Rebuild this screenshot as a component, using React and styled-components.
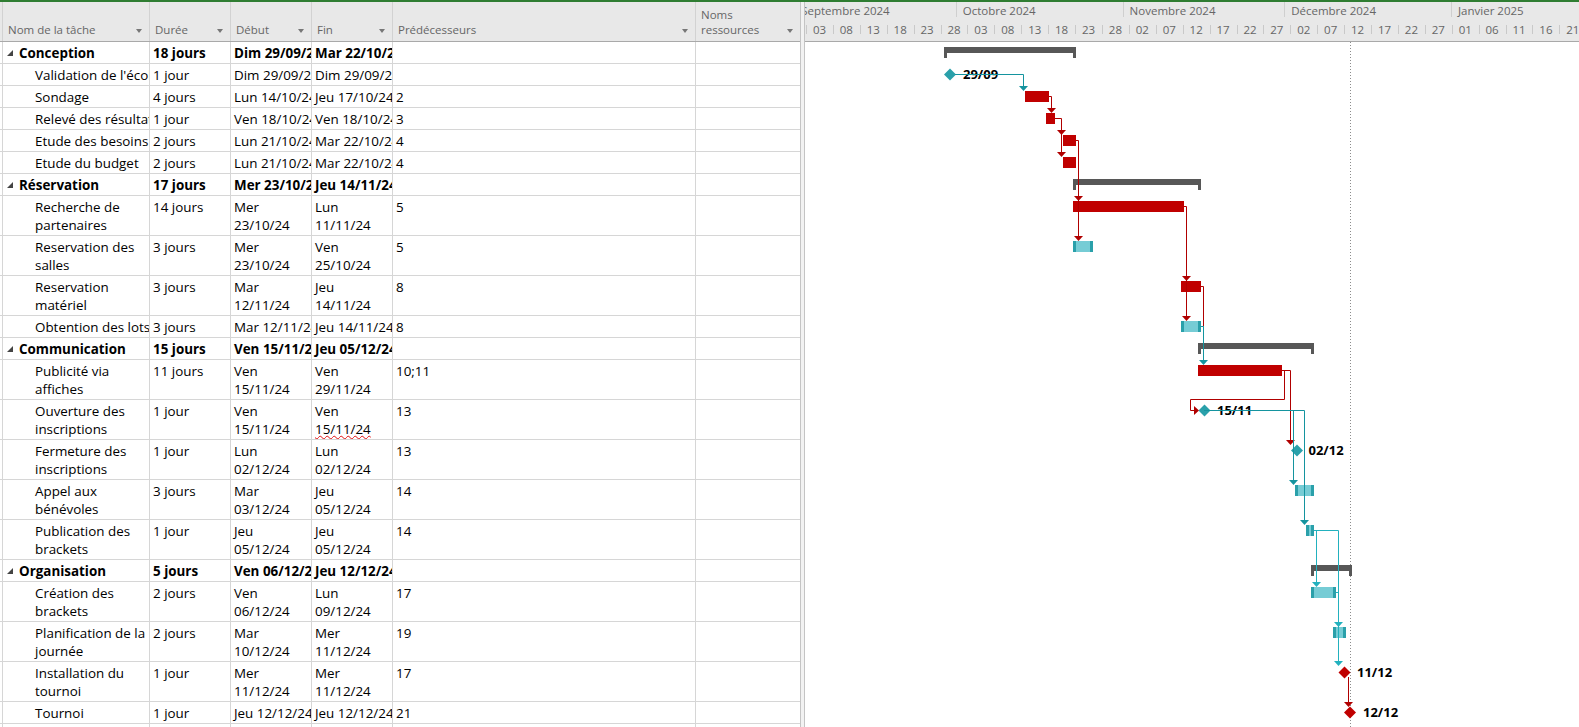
import React from "react";
import styled, { createGlobalStyle } from "styled-components";

const FONT = `"Open Sans", "Noto Sans", sans-serif`;
const DAY = 5.384;

const GlobalStyle = createGlobalStyle`
  html, body { margin: 0; padding: 0; background: #fff; }
  body { font-family: ${FONT}; color: #000; }
`;

const columns = [
  { key: "name", label: "Nom de la tâche", width: 147 },
  { key: "dur", label: "Durée", width: 81 },
  { key: "start", label: "Début", width: 81 },
  { key: "end", label: "Fin", width: 81 },
  { key: "pred", label: "Prédécesseurs", width: 303 },
  { key: "res", label: ["Noms", "ressources"], width: 104, last: true },
];

const tasks = [
  { name: "Conception", dur: "18 jours", start: "Dim 29/09/24", end: "Mar 22/10/24", pred: "", summary: true },
  { name: "Validation de l'école", dur: "1 jour", start: "Dim 29/09/24", end: "Dim 29/09/24", pred: "" },
  { name: "Sondage", dur: "4 jours", start: "Lun 14/10/24", end: "Jeu 17/10/24", pred: "2" },
  { name: "Relevé des résultats", dur: "1 jour", start: "Ven 18/10/24", end: "Ven 18/10/24", pred: "3" },
  { name: "Etude des besoins", dur: "2 jours", start: "Lun 21/10/24", end: "Mar 22/10/24", pred: "4" },
  { name: "Etude du budget", dur: "2 jours", start: "Lun 21/10/24", end: "Mar 22/10/24", pred: "4" },
  { name: "Réservation", dur: "17 jours", start: "Mer 23/10/24", end: "Jeu 14/11/24", pred: "", summary: true },
  { name: ["Recherche de", "partenaires"], dur: "14 jours", start: ["Mer", "23/10/24"], end: ["Lun", "11/11/24"], pred: "5" },
  { name: ["Reservation des", "salles"], dur: "3 jours", start: ["Mer", "23/10/24"], end: ["Ven", "25/10/24"], pred: "5" },
  { name: ["Reservation", "matériel"], dur: "3 jours", start: ["Mar", "12/11/24"], end: ["Jeu", "14/11/24"], pred: "8" },
  { name: "Obtention des lots", dur: "3 jours", start: "Mar 12/11/24", end: "Jeu 14/11/24", pred: "8" },
  { name: "Communication", dur: "15 jours", start: "Ven 15/11/24", end: "Jeu 05/12/24", pred: "", summary: true },
  { name: ["Publicité via", "affiches"], dur: "11 jours", start: ["Ven", "15/11/24"], end: ["Ven", "29/11/24"], pred: "10;11" },
  { name: ["Ouverture des", "inscriptions"], dur: "1 jour", start: ["Ven", "15/11/24"], end: ["Ven", "15/11/24"], pred: "13", typo: true },
  { name: ["Fermeture des", "inscriptions"], dur: "1 jour", start: ["Lun", "02/12/24"], end: ["Lun", "02/12/24"], pred: "13" },
  { name: ["Appel aux", "bénévoles"], dur: "3 jours", start: ["Mar", "03/12/24"], end: ["Jeu", "05/12/24"], pred: "14" },
  { name: ["Publication des", "brackets"], dur: "1 jour", start: ["Jeu", "05/12/24"], end: ["Jeu", "05/12/24"], pred: "14" },
  { name: "Organisation", dur: "5 jours", start: "Ven 06/12/24", end: "Jeu 12/12/24", pred: "", summary: true },
  { name: ["Création des", "brackets"], dur: "2 jours", start: ["Ven", "06/12/24"], end: ["Lun", "09/12/24"], pred: "17" },
  { name: ["Planification de la", "journée"], dur: "2 jours", start: ["Mar", "10/12/24"], end: ["Mer", "11/12/24"], pred: "19" },
  { name: ["Installation du", "tournoi"], dur: "1 jour", start: ["Mer", "11/12/24"], end: ["Mer", "11/12/24"], pred: "17" },
  { name: "Tournoi", dur: "1 jour", start: "Jeu 12/12/24", end: "Jeu 12/12/24", pred: "21" },
];

const rowH = (t) => (Array.isArray(t.name) ? 40 : 22);
const tops = [];
tasks.reduce((y, t) => {
  tops.push(y);
  return y + rowH(t);
}, 42);

const months = [
  { label: "Septembre 2024", days: 30 },
  { label: "Octobre 2024", days: 31 },
  { label: "Novembre 2024", days: 30 },
  { label: "Décembre 2024", days: 31 },
  { label: "Janvier 2025", days: 31 },
];

const dayTicks = Array.from({ length: 30 }, (_, i) =>
  String(new Date(2024, 8, 3 + i * 5).getDate()).padStart(2, "0")
);

// gantt items, x in page pixels
const bars = [
  { i: 0, kind: "summary", x1: 944, x2: 1076 },
  { i: 1, kind: "milestone", cx: 950, color: "teal", label: "29/09", lx: 963 },
  { i: 2, kind: "crit", x1: 1025, x2: 1049 },
  { i: 3, kind: "crit", x1: 1046, x2: 1055 },
  { i: 4, kind: "crit", x1: 1063, x2: 1076 },
  { i: 5, kind: "crit", x1: 1063, x2: 1076 },
  { i: 6, kind: "summary", x1: 1073, x2: 1201 },
  { i: 7, kind: "crit", x1: 1073, x2: 1184 },
  { i: 8, kind: "task", x1: 1073, x2: 1093 },
  { i: 9, kind: "crit", x1: 1181, x2: 1201 },
  { i: 10, kind: "task", x1: 1181, x2: 1201 },
  { i: 11, kind: "summary", x1: 1198, x2: 1314 },
  { i: 12, kind: "crit", x1: 1198, x2: 1282 },
  { i: 13, kind: "milestone", cx: 1204.5, color: "teal", label: "15/11", lx: 1217 },
  { i: 14, kind: "milestone", cx: 1297, color: "teal", label: "02/12", lx: 1308.5 },
  { i: 15, kind: "task", x1: 1295, x2: 1314 },
  { i: 16, kind: "task", x1: 1306, x2: 1314 },
  { i: 17, kind: "summary", x1: 1311, x2: 1352 },
  { i: 18, kind: "task", x1: 1311, x2: 1336 },
  { i: 19, kind: "task", x1: 1333, x2: 1346 },
  { i: 20, kind: "milestone", cx: 1344.5, color: "red", label: "11/12", lx: 1357 },
  { i: 21, kind: "milestone", cx: 1350, color: "red", label: "12/12", lx: 1363 },
];

const RED_LINK = "#b00000";
const TEAL_LINK = "#14949f";
const LIGHT_LINK = "#22b1be";

const links = [
  { c: TEAL_LINK, d: "M955 74.5 H1023.5 V87", arrows: [[1023.5, 91]] },
  { c: RED_LINK, d: "M1049 96.5 H1051.5 V109", arrows: [[1051.5, 113]] },
  { c: RED_LINK, d: "M1055 118.5 H1061.5 V153", arrows: [[1061.5, 135], [1061.5, 157]] },
  { c: RED_LINK, d: "M1076 140.5 H1078.5 V237", arrows: [[1078.5, 201], [1078.5, 241]] },
  { c: RED_LINK, d: "M1184 206.5 H1186.5 V317", arrows: [[1186.5, 281], [1186.5, 321]] },
  { c: RED_LINK, d: "M1201 286.5 H1203.5 V326.5", arrows: [] },
  { c: TEAL_LINK, d: "M1201 326.5 H1203.5 V361", arrows: [[1203.5, 365]] },
  { c: RED_LINK, d: "M1282 370.5 H1284.5 V399.5 H1190.5 V410.5 H1195", arrows: [[1199, 410.5, "right"]] },
  { c: RED_LINK, d: "M1282 370.5 H1290.5 V441", arrows: [[1290.5, 445]] },
  { c: TEAL_LINK, d: "M1204 410.5 H1304.5 V521 M1293.5 410.5 V481", arrows: [[1293.5, 485], [1304.5, 525]] },
  { c: LIGHT_LINK, d: "M1314 530.5 H1338.5 V662 M1316.5 530.5 V583 M1336 592.5 H1338.5", arrows: [[1316.5, 587], [1338.5, 627], [1338.5, 666]] },
  { c: RED_LINK, d: "M1348.5 677 V703", arrows: [[1348.5, 707]] },
];

const Page = styled.div`
  height: 727px;
  overflow: hidden;
  border-top: 2px solid #2f7d32;
  display: flex;
  font-family: ${FONT};
`;

const TablePane = styled.div`
  width: 800px;
  flex: none;
  overflow: hidden;
`;

const HeaderRow = styled.div`
  display: flex;
  height: 40px;
  box-sizing: border-box;
  background: #e8e8e8;
  border-bottom: 1px solid #a9a9a9;
`;

const HeadLead = styled.div`
  width: 3px;
  flex: none;
  box-sizing: border-box;
  border-right: 1px solid ${(p) => (p.$head ? "#d2d2d2" : "#d6d6d6")};
`;

const HeadCell = styled.div`
  width: ${(p) => p.$w}px;
  flex: none;
  box-sizing: border-box;
  border-right: ${(p) => (p.$last ? "none" : "1px solid #d2d2d2")};
  display: flex;
  align-items: flex-end;
  justify-content: space-between;
  padding: 0 7px 4px 5px;
  font-size: 11.5px;
  line-height: 15px;
  color: #666;
`;

const HeadArrow = styled.span`
  width: 0;
  height: 0;
  margin-bottom: 4px;
  border-left: 3.5px solid transparent;
  border-right: 3.5px solid transparent;
  border-top: 4px solid #777;
`;

const Row = styled.div`
  display: flex;
  height: ${(p) => p.$h}px;
  box-sizing: border-box;
  border-bottom: 1px solid #d6d6d6;
  font-weight: ${(p) => (p.$bold ? 700 : 400)};
`;

const Cell = styled.div`
  width: ${(p) => p.$w}px;
  flex: none;
  box-sizing: border-box;
  border-right: ${(p) => (p.$last ? "none" : "1px solid #d6d6d6")};
  padding: 2px 0 0 3px;
  font-size: 13.4px;
  line-height: 18px;
  white-space: nowrap;
  overflow: hidden;
`;

const NameCell = styled(Cell)`
  display: flex;
  align-items: flex-start;
  padding-left: ${(p) => (p.$summary ? 4 : 32)}px;
`;

const Toggle = styled.svg`
  width: 6px;
  height: 6px;
  flex: none;
  margin: 6px 6px 0 0;
`;

const Line = styled.div`
  text-decoration: ${(p) => (p.$typo ? "underline wavy #e01010" : "none")};
  text-underline-offset: 1px;
  text-decoration-thickness: 1px;
`;

const Splitter = styled.div`
  width: 5px;
  flex: none;
  box-sizing: border-box;
  background: #f2f2f2;
  border-left: 1px solid #c4c4c4;
  border-right: 1px solid #c4c4c4;
`;

const ChartPane = styled.div`
  flex: 1;
  min-width: 0;
  overflow: hidden;
`;

const TimeHeader = styled.div`
  height: 40px;
  box-sizing: border-box;
  background: #e8e8e8;
  border-bottom: 1px solid #a9a9a9;
  overflow: hidden;
  color: #666;
  font-size: 11.5px;
`;

const MonthTier = styled.div`
  display: flex;
  height: 18px;
  margin-left: -9.8px;
`;

const Month = styled.div`
  width: ${(p) => p.$w}px;
  flex: none;
  box-sizing: border-box;
  padding: 1px 0 0 6px;
  line-height: 16px;
  white-space: nowrap;
  background: linear-gradient(#cfcfcf, #cfcfcf) no-repeat right 0 top 0 / 1px 15px;
`;

const DayTier = styled.div`
  display: flex;
  height: 21px;
  padding-left: 1px;
`;

const Day = styled.div`
  width: ${DAY * 5}px;
  flex: none;
  text-align: center;
  line-height: 20px;
  background: linear-gradient(#c9c9c9, #c9c9c9) no-repeat left 0 top 5px / 1px 9px;
`;

const ChartBody = styled.svg`
  display: block;
`;

const Lines = ({ value, typo }) =>
  Array.isArray(value) ? (
    <div>
      {value.map((l, k) => (
        <Line key={k} $typo={typo && k === 1}>
          {l}
        </Line>
      ))}
    </div>
  ) : (
    <span>{value}</span>
  );

const Arrow = ({ x, y, dir, color }) =>
  dir === "right" ? (
    <polygon points={`${x - 5},${y - 4.5} ${x - 5},${y + 4.5} ${x},${y}`} fill={color} />
  ) : (
    <polygon points={`${x - 4.5},${y - 5} ${x + 4.5},${y - 5} ${x},${y}`} fill={color} />
  );

const GanttItem = ({ b }) => {
  const top = tops[b.i];
  if (b.kind === "summary") {
    return (
      <g fill="#575757">
        <rect x={b.x1} y={top + 5} width={b.x2 - b.x1} height={6} />
        <rect x={b.x1} y={top + 5} width={3} height={11} />
        <rect x={b.x2 - 3} y={top + 5} width={3} height={11} />
      </g>
    );
  }
  if (b.kind === "crit") {
    return <rect x={b.x1} y={top + 5} width={b.x2 - b.x1} height={11} fill="#c00000" />;
  }
  if (b.kind === "task") {
    return (
      <g>
        <rect x={b.x1} y={top + 5} width={b.x2 - b.x1} height={11} fill="#76ccd5" />
        <rect x={b.x1} y={top + 5} width={3} height={11} fill="#2aa0aa" />
        <rect x={b.x2 - 3} y={top + 5} width={3} height={11} fill="#2aa0aa" />
      </g>
    );
  }
  const cy = top + 10.5;
  const fill = b.color === "red" ? "#c00000" : "#2aa0aa";
  return (
    <g>
      <polygon
        points={`${b.cx},${cy - 6} ${b.cx + 6},${cy} ${b.cx},${cy + 6} ${b.cx - 6},${cy}`}
        fill={fill}
      />
      <text x={b.lx} y={cy + 4.5} fontFamily={FONT} fontSize="13" fontWeight="700" fill="#000">
        {b.label}
      </text>
    </g>
  );
};

const App = () => (
  <>
    <GlobalStyle />
    <Page>
      <TablePane>
        <HeaderRow>
          <HeadLead $head />
          {columns.map((c) => (
            <HeadCell key={c.key} $w={c.width} $last={c.last}>
              <Lines value={c.label} />
              <HeadArrow />
            </HeadCell>
          ))}
        </HeaderRow>
        {tasks.map((t, i) => (
          <Row key={i} $h={rowH(t)} $bold={t.summary}>
            <HeadLead />
            <NameCell $w={147} $summary={t.summary}>
              {t.summary && (
                <Toggle viewBox="0 0 6 6">
                  <polygon points="6,0 6,6 0,6" fill="#444" />
                </Toggle>
              )}
              <Lines value={t.name} />
            </NameCell>
            <Cell $w={81}>{t.dur}</Cell>
            <Cell $w={81}>
              <Lines value={t.start} />
            </Cell>
            <Cell $w={81}>
              <Lines value={t.end} typo={t.typo} />
            </Cell>
            <Cell $w={303}>{t.pred}</Cell>
            <Cell $w={104} $last />
          </Row>
        ))}
        <Row $h={22}>
          <HeadLead />
          <Cell $w={147} />
          <Cell $w={81} />
          <Cell $w={81} />
          <Cell $w={81} />
          <Cell $w={303} />
          <Cell $w={104} $last />
        </Row>
      </TablePane>
      <Splitter />
      <ChartPane>
        <TimeHeader>
          <MonthTier>
            {months.map((m) => (
              <Month key={m.label} $w={m.days * DAY}>
                {m.label}
              </Month>
            ))}
          </MonthTier>
          <DayTier>
            {dayTicks.map((d, k) => (
              <Day key={k}>{d}</Day>
            ))}
          </DayTier>
        </TimeHeader>
        <ChartBody width="774" height="685" viewBox="805 42 774 685">
          <line x1="1350.5" y1="42" x2="1350.5" y2="727" stroke="#8c8c8c" strokeDasharray="1 2" />
          {bars.map((b) => (
            <GanttItem key={b.i} b={b} />
          ))}
          {links.map((l, k) => (
            <g key={k}>
              <path d={l.d} fill="none" stroke={l.c} strokeWidth="1" />
              {l.arrows.map(([x, y, dir], j) => (
                <Arrow key={j} x={x} y={y} dir={dir} color={l.c} />
              ))}
            </g>
          ))}
        </ChartBody>
      </ChartPane>
    </Page>
  </>
);

export default App;
